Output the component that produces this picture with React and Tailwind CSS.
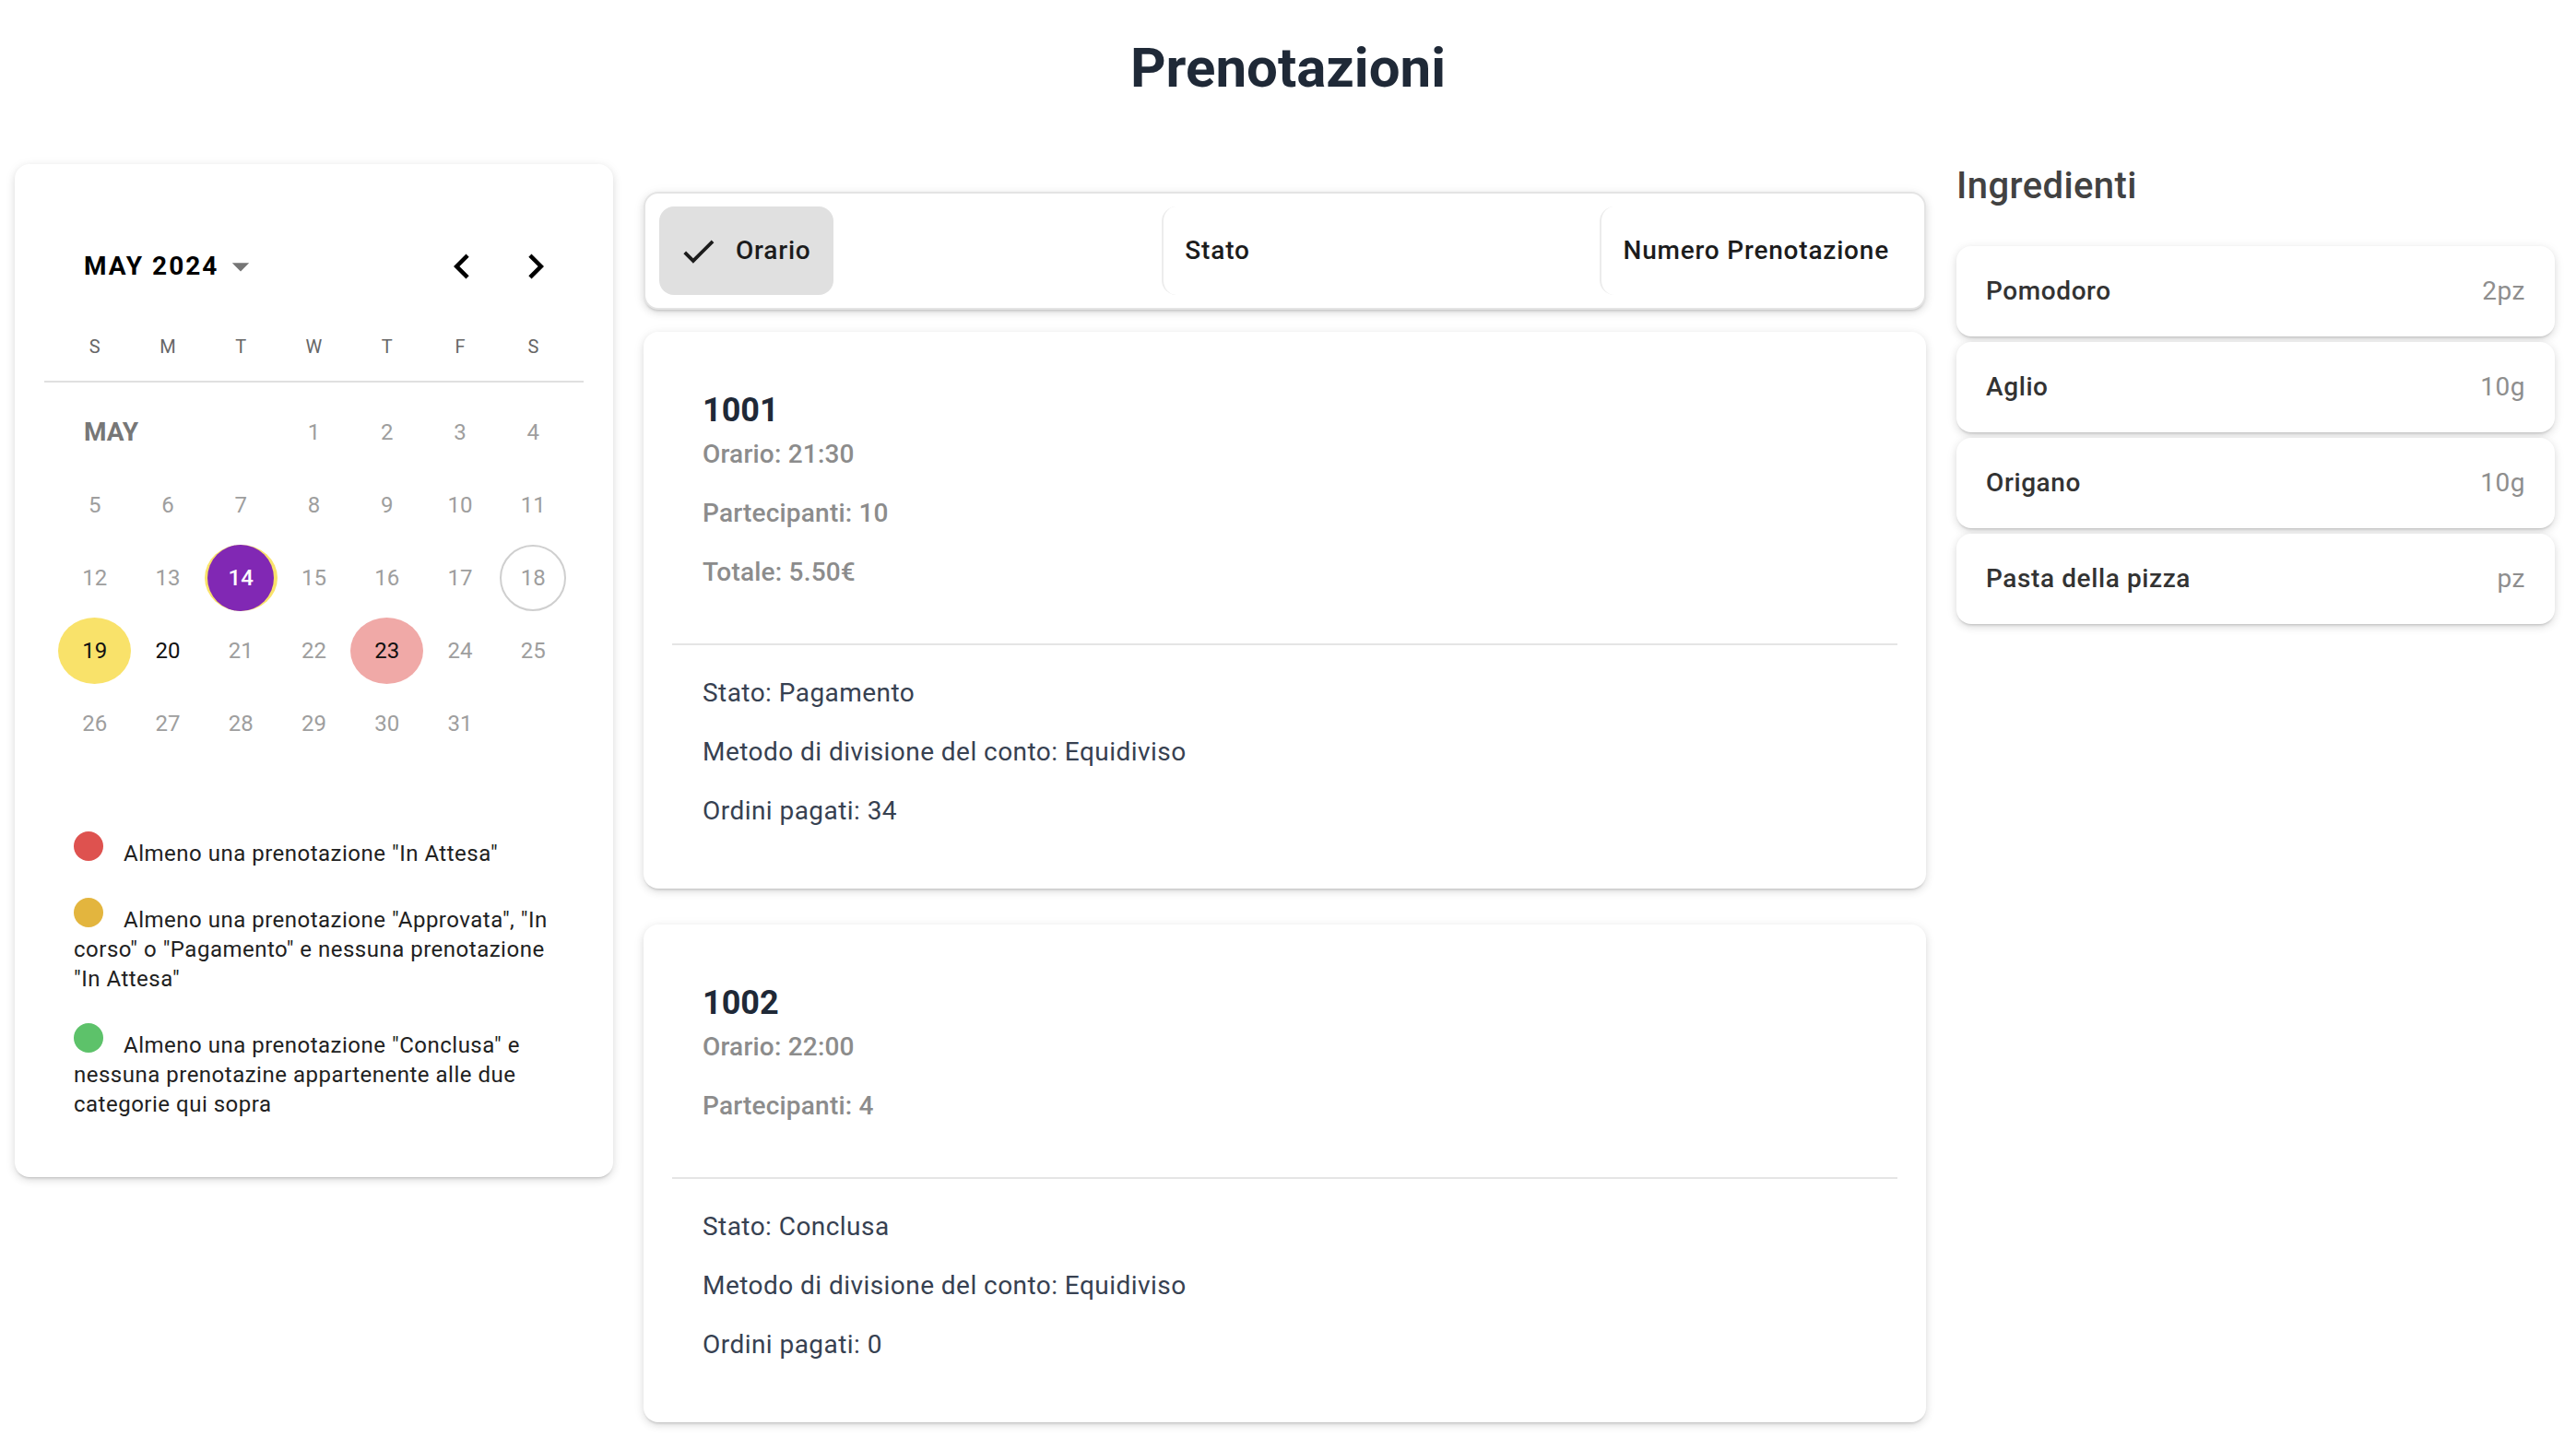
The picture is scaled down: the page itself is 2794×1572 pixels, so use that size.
import clsx from 'clsx'

const WEEKDAYS = ['S', 'M', 'T', 'W', 'T', 'F', 'S']

// calendar weeks for May 2024; null = empty leading cell
const WEEKS = [
  [null, null, null, 1, 2, 3, 4],
  [5, 6, 7, 8, 9, 10, 11],
  [12, 13, 14, 15, 16, 17, 18],
  [19, 20, 21, 22, 23, 24, 25],
  [26, 27, 28, 29, 30, 31, null],
]

const MARKS = { 14: 'bg-[#f9e26a]', 19: 'bg-[#f9e26a]', 23: 'bg-[#f0a9a7]' }

const LEGEND = [
  { color: 'bg-[#de524f]', text: 'Almeno una prenotazione "In Attesa"' },
  { color: 'bg-[#e3b53e]', text: 'Almeno una prenotazione "Approvata", "In corso" o "Pagamento" e nessuna prenotazione "In Attesa"' },
  { color: 'bg-[#5dc26a]', text: 'Almeno una prenotazione "Conclusa" e nessuna prenotazine appartenente alle due categorie qui sopra' },
]

const BOOKINGS = [
  {
    id: 1001,
    info: ['Orario: 21:30', 'Partecipanti: 10', 'Totale: 5.50€'],
    details: ['Stato: Pagamento', 'Metodo di divisione del conto: Equidiviso', 'Ordini pagati: 34'],
  },
  {
    id: 1002,
    info: ['Orario: 22:00', 'Partecipanti: 4'],
    details: ['Stato: Conclusa', 'Metodo di divisione del conto: Equidiviso', 'Ordini pagati: 0'],
  },
]

const INGREDIENTS = [
  ['Pomodoro', '2pz'],
  ['Aglio', '10g'],
  ['Origano', '10g'],
  ['Pasta della pizza', 'pz'],
]

const SHADOW = 'shadow-[0_3px_3px_-2px_rgba(0,0,0,0.18),0_3px_8px_0_rgba(0,0,0,0.10),0_2px_14px_0_rgba(0,0,0,0.06)]'

function Icon({ d, className }) {
  return (
    <svg viewBox="0 0 24 24" className={className} fill="currentColor" aria-hidden="true">
      <path d={d} />
    </svg>
  )
}

function Day({ d }) {
  if (d === null) return <div className="h-[79px]" />
  const selected = d === 14
  const today = d === 18
  return (
    <div className="flex h-[79px] items-center justify-center">
      <div className={clsx('flex h-[72px] w-[79px] items-center justify-center rounded-[50%]', MARKS[d])}>
        <div
          className={clsx(
            'flex size-[72px] items-center justify-center rounded-full text-[24px]',
            selected && 'bg-[#8128b4] font-medium text-white',
            today && 'border-2 border-[#cfcfcf] text-[#9e9e9e]',
            !selected && !today && (MARKS[d] || d === 20 ? 'text-[#111111]' : 'text-[#9e9e9e]'),
          )}
        >
          {d}
        </div>
      </div>
    </div>
  )
}

function CalendarCard() {
  return (
    <div className={clsx('rounded-[16px] bg-white px-[32px] pt-[81px] pb-[63px]', SHADOW)}>
      {/* header */}
      <div className="flex h-[60px] items-center pl-[43px] pr-[25px]">
        <span className="text-[28px] font-bold tracking-[2px] text-black">MAY 2024</span>
        <Icon d="M7 10l5 5 5-5z" className="ml-[2px] size-[44px] text-[#757575]" />
        <div className="ml-auto flex items-center gap-[26px]">
          <Icon d="M15.41 16.59 10.83 12l4.58-4.59L14 6l-6 6 6 6 1.41-1.41z" className="size-[54px] text-black" />
          <Icon d="M8.59 16.59 13.17 12 8.59 7.41 10 6l6 6-6 6-1.41-1.41z" className="size-[54px] text-black" />
        </div>
      </div>

      {/* weekdays */}
      <div className="mx-[15px] mt-[37px] grid h-[40px] grid-cols-7 items-center">
        {WEEKDAYS.map((w, i) => (
          <div key={i} className="text-center text-[20px] text-[#666666]">{w}</div>
        ))}
      </div>
      <div className="mt-[17px] h-[2px] bg-[#e0e0e0]" />

      {/* days */}
      <div className="relative mx-[15px] mt-[14px] grid grid-cols-7">
        <span className="absolute left-[28px] top-0 flex h-[79px] items-center text-[28px] font-bold text-[#777777]">MAY</span>
        {WEEKS.flat().map((d, i) => (
          <Day key={i} d={d} />
        ))}
      </div>

      {/* legend */}
      <div className="mt-[78px] px-[32px] text-[24px] leading-[32px] tracking-[0.5px] text-[#212121]">
        {LEGEND.map((l, i) => (
          <p key={i} className={clsx(i > 0 && 'mt-[32px]')}>
            <span className={clsx('mr-[22px] inline-block size-[32px] rounded-full', l.color)} />
            {l.text}
          </p>
        ))}
      </div>
    </div>
  )
}

function SortBar() {
  return (
    <div className={clsx('flex h-[128px] items-center justify-between rounded-[16px] border-2 border-[#e4e4e4] bg-white px-[15px]', SHADOW)}>
      <div className="flex h-[96px] items-center gap-[18px] rounded-[16px] bg-[#e0e0e0] pl-[20px] pr-[24px] text-[28px] font-medium tracking-[0.8px] text-[#1c1c1c]">
        <Icon d="M9 16.17 4.83 12l-1.42 1.41L9 19 21 7l-1.41-1.41z" className="size-[45px]" />
        Orario
      </div>
      <div className="flex h-[96px] items-center rounded-l-[16px] border-l-2 border-[#ececec] px-[23px] text-[28px] font-medium tracking-[0.8px] text-[#1c1c1c]">
        Stato
      </div>
      <div className="flex h-[96px] items-center rounded-l-[16px] border-l-2 border-[#ececec] px-[23px] text-[28px] font-medium tracking-[0.8px] text-[#1c1c1c]">
        Numero Prenotazione
      </div>
    </div>
  )
}

function BookingCard({ b }) {
  return (
    <div className={clsx('rounded-[16px] bg-white', SHADOW)}>
      <div className="px-[64px] pt-[69px] pb-[45px]">
        <div className="text-[36px] font-bold leading-[32px] text-[#1f2937]">{b.id}</div>
        {b.info.map((t) => (
          <div key={t} className="text-[28px] font-medium leading-[64px] tracking-[0.2px] text-[#8c8c8c]">{t}</div>
        ))}
      </div>
      <div className="mx-[31px] h-[2px] bg-[#e5e5e5]" />
      <div className="px-[64px] pt-[20px] pb-[52px] text-[28px] leading-[64px] tracking-[0.45px] text-[#374151]">
        {b.details.map((t) => (
          <div key={t}>{t}</div>
        ))}
      </div>
    </div>
  )
}

export default function App() {
  return (
    <div className="min-h-screen bg-white font-[Roboto,sans-serif]">
      <h1 className="pt-[38px] text-center text-[60px] font-bold leading-[72px] text-[#1f2937]">Prenotazioni</h1>

      <div className="mt-[68px] grid grid-cols-[649px_1391px_649px] items-start gap-[33px] pl-[16px]">
        <CalendarCard />

        <div className="mt-[30px] flex flex-col">
          <SortBar />
          <div className="mt-[24px] flex flex-col gap-[39px]">
            {BOOKINGS.map((b) => (
              <BookingCard key={b.id} b={b} />
            ))}
          </div>
        </div>

        <div>
          <h2 className="text-[40px] font-medium leading-[48px] tracking-[0.4px] text-[#424242]">Ingredienti</h2>
          <div className="mt-[41px] flex flex-col gap-[6px]">
            {INGREDIENTS.map(([name, qty]) => (
              <div key={name} className={clsx('flex h-[98px] items-center justify-between rounded-[16px] bg-white px-[32px]', SHADOW)}>
                <span className="text-[28px] font-medium tracking-[0.6px] text-[#333333]">{name}</span>
                <span className="text-[28px] tracking-[0.5px] text-[#8e8e8e]">{qty}</span>
              </div>
            ))}
          </div>
        </div>
      </div>
    </div>
  )
}
